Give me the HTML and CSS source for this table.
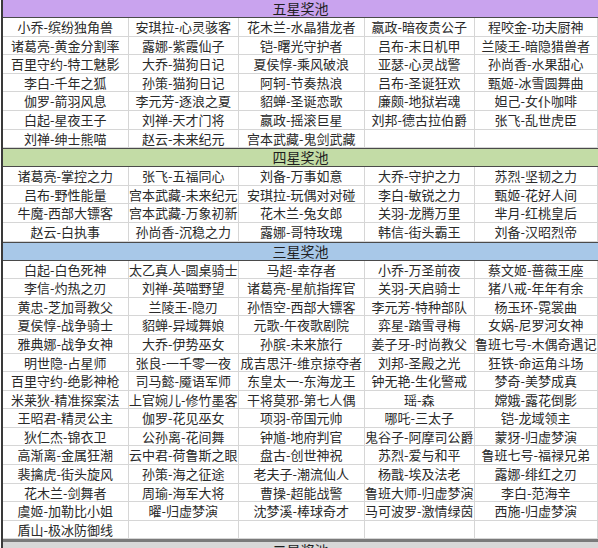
FILE: index.html
```html
<!DOCTYPE html>
<html lang="zh-CN">
<head>
<meta charset="utf-8">
<title>奖池</title>
<link rel="stylesheet" href="styles.css">
</head>
<body>
<div class="sheet">
  <div class="head purple">五星奖池</div>
  <div class="grid">
    <div>小乔-缤纷独角兽</div><div>安琪拉-心灵骇客</div><div>花木兰-水晶猎龙者</div><div>嬴政-暗夜贵公子</div><div>程咬金-功夫厨神</div>
    <div>诸葛亮-黄金分割率</div><div>露娜-紫霞仙子</div><div>铠-曙光守护者</div><div>吕布-末日机甲</div><div>兰陵王-暗隐猎兽者</div>
    <div>百里守约-特工魅影</div><div>大乔-猫狗日记</div><div>夏侯惇-乘风破浪</div><div>亚瑟-心灵战警</div><div>孙尚香-水果甜心</div>
    <div>李白-千年之狐</div><div>孙策-猫狗日记</div><div>阿轲-节奏热浪</div><div>吕布-圣诞狂欢</div><div>甄姬-冰雪圆舞曲</div>
    <div>伽罗-箭羽风息</div><div>李元芳-逐浪之夏</div><div>貂蝉-圣诞恋歌</div><div>廉颇-地狱岩魂</div><div>妲己-女仆咖啡</div>
    <div>白起-星夜王子</div><div>刘禅-天才门将</div><div>嬴政-摇滚巨星</div><div>刘邦-德古拉伯爵</div><div>张飞-乱世虎臣</div>
    <div>刘禅-绅士熊喵</div><div>赵云-未来纪元</div><div>宫本武藏-鬼剑武藏</div><div></div><div></div>
  </div>
  <div class="head green">四星奖池</div>
  <div class="grid">
    <div>诸葛亮-掌控之力</div><div>张飞-五福同心</div><div>刘备-万事如意</div><div>大乔-守护之力</div><div>苏烈-坚韧之力</div>
    <div>吕布-野性能量</div><div>宫本武藏-未来纪元</div><div>安琪拉-玩偶对对碰</div><div>李白-敏锐之力</div><div>甄姬-花好人间</div>
    <div>牛魔-西部大镖客</div><div>宫本武藏-万象初新</div><div>花木兰-兔女郎</div><div>关羽-龙腾万里</div><div>芈月-红桃皇后</div>
    <div>赵云-白执事</div><div>孙尚香-沉稳之力</div><div>露娜-哥特玫瑰</div><div>韩信-街头霸王</div><div>刘备-汉昭烈帝</div>
  </div>
  <div class="head blue">三星奖池</div>
  <div class="grid">
    <div>白起-白色死神</div><div>太乙真人-圆桌骑士</div><div>马超-幸存者</div><div>小乔-万圣前夜</div><div>蔡文姬-蔷薇王座</div>
    <div>李信-灼热之刃</div><div>刘禅-英喵野望</div><div>诸葛亮-星航指挥官</div><div>关羽-天启骑士</div><div>猪八戒-年年有余</div>
    <div>黄忠-芝加哥教父</div><div>兰陵王-隐刃</div><div>孙悟空-西部大镖客</div><div>李元芳-特种部队</div><div>杨玉环-霓裳曲</div>
    <div>夏侯惇-战争骑士</div><div>貂蝉-异域舞娘</div><div>元歌-午夜歌剧院</div><div>弈星-踏雪寻梅</div><div>女娲-尼罗河女神</div>
    <div>雅典娜-战争女神</div><div>大乔-伊势巫女</div><div>孙膑-未来旅行</div><div>姜子牙-时尚教父</div><div>鲁班七号-木偶奇遇记</div>
    <div>明世隐-占星师</div><div>张良-一千零一夜</div><div>成吉思汗-维京掠夺者</div><div>刘邦-圣殿之光</div><div>狂铁-命运角斗场</div>
    <div>百里守约-绝影神枪</div><div>司马懿-魇语军师</div><div>东皇太一-东海龙王</div><div>钟无艳-生化警戒</div><div>梦奇-美梦成真</div>
    <div>米莱狄-精准探案法</div><div>上官婉儿-修竹墨客</div><div>干将莫邪-第七人偶</div><div>瑶-森</div><div>嫦娥-露花倒影</div>
    <div>王昭君-精灵公主</div><div>伽罗-花见巫女</div><div>项羽-帝国元帅</div><div>哪吒-三太子</div><div>铠-龙域领主</div>
    <div>狄仁杰-锦衣卫</div><div>公孙离-花间舞</div><div>钟馗-地府判官</div><div>鬼谷子-阿摩司公爵</div><div>蒙犽-归虚梦演</div>
    <div>高渐离-金属狂潮</div><div>云中君-荷鲁斯之眼</div><div>盘古-创世神祝</div><div>苏烈-爱与和平</div><div>鲁班七号-福禄兄弟</div>
    <div>裴擒虎-街头旋风</div><div>孙策-海之征途</div><div>老夫子-潮流仙人</div><div>杨戬-埃及法老</div><div>露娜-绯红之刃</div>
    <div>花木兰-剑舞者</div><div>周瑜-海军大将</div><div>曹操-超能战警</div><div>鲁班大师-归虚梦演</div><div>李白-范海辛</div>
    <div>虞姬-加勒比小姐</div><div>曜-归虚梦演</div><div>沈梦溪-棒球奇才</div><div>马可波罗-激情绿茵</div><div>西施-归虚梦演</div>
    <div>盾山-极冰防御线</div><div></div><div></div><div></div><div></div>
  </div>
  <div class="head gray">二星奖池</div>
</div>
</body>
</html>
```

FILE: styles.css
```css
html, body {
  margin: 0;
  padding: 0;
  background: #ffffff;
  height: 548px;
  overflow: hidden;
}

.sheet {
  width: 595px;
  margin-left: 1px;
  border-left: 2px solid #3a3a3a;
  font-family: "Noto Sans CJK SC", "Noto Sans", sans-serif;
  font-size: 13px;
  color: #2a2a2a;
}

.head {
  height: 17px;
  line-height: 17px;
  text-align: center;
  border-top: 1px solid #4a4a4a;
  border-bottom: 1px solid #4a4a4a;
  font-size: 14px;
  color: #1e1e1e;
}

.sheet > .head:first-child {
  border-top: none;
  height: 17px;
}

.purple { background: #c9a3ee; }
.green { background: #c3dca6; }
.blue { background: #a8c8e8; }
.gray { background: #d8d8d8; border-top: 3px solid #7a7a7a; }

.grid {
  display: grid;
  grid-template-columns: 125.7px 110.3px 125.7px 110px 123.3px;
  grid-auto-rows: 18.6px;
}

.grid > div {
  border-right: 1px solid #d6d6d6;
  border-bottom: 1px solid #d6d6d6;
  text-align: center;
  line-height: 17.6px;
  white-space: nowrap;
  overflow: hidden;
  background: #ffffff;
}
```
